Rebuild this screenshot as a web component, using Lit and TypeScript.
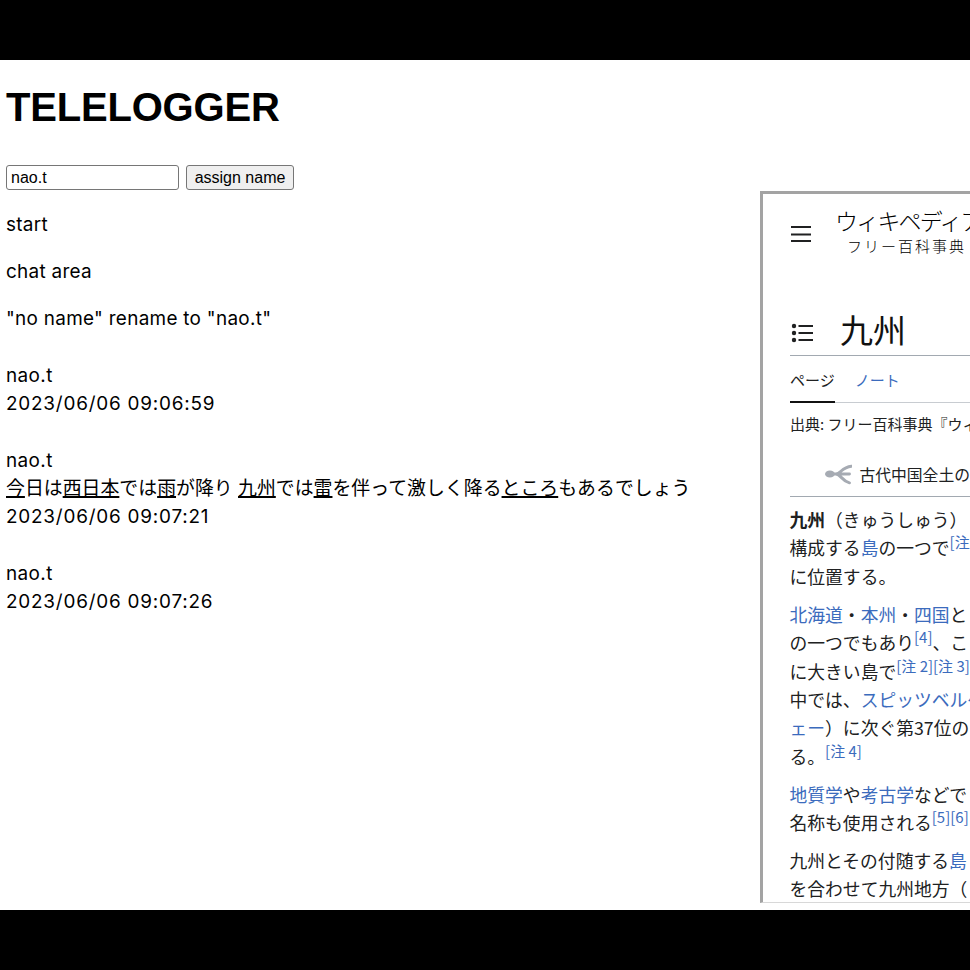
import {LitElement, css, html} from 'lit';
import {customElement} from 'lit/decorators.js';

@customElement('wiki-frame')
export class WikiFrame extends LitElement {
  static styles = css`
    :host {
      display: block;
      box-sizing: border-box;
      width: 210px;
      height: 712px;
      overflow: hidden;
      background: #fff;
      border: 3px solid #a3a3a3;
      border-right: none;
      border-bottom: 1px solid #d8d8d8;
      font-family: "Noto Sans CJK JP", "Liberation Sans", sans-serif;
      color: #202122;
    }

    .inner {
      width: 180px;
      padding-left: 27px;
      white-space: nowrap;
    }

    .head {
      display: flex;
      gap: 23px;
      height: 74px;
      padding-top: 13px;
      box-sizing: border-box;
    }

    .burger {
      display: block;
      margin-top: 18px;
      flex: none;
    }

    .brand {
      color: #000;
    }

    .brand-name {
      font-size: 23px;
      line-height: 26px;
      letter-spacing: -1.8px;
      font-weight: 300;
    }

    .brand-sub {
      font-size: 15px;
      line-height: 20px;
      letter-spacing: 2px;
      font-weight: 300;
      margin-top: 3px;
      margin-left: 12px;
    }

    .title-row {
      display: flex;
      align-items: flex-end;
      gap: 26px;
      height: 88px;
      box-sizing: border-box;
      border-bottom: 1px solid #a2a9b1;
    }

    .title-row svg {
      margin-bottom: 12px;
      margin-left: 1px;
      margin-right: -1px;
    }

    .title-row h1 {
      margin: 0 0 4px;
      font-size: 33px;
      line-height: 44px;
      font-weight: 400;
      color: #111;
    }

    .tabs {
      display: flex;
      gap: 20px;
      height: 47px;
      box-sizing: border-box;
      border-bottom: 1px solid #c8ccd1;
      font-size: 15px;
    }

    .tab {
      line-height: 48px;
      height: 47px;
      box-sizing: border-box;
    }

    .tab.active {
      color: #202122;
      border-bottom: 2px solid #111;
    }

    .tab.link {
      color: #3b6bbd;
    }

    .source {
      font-size: 15px;
      line-height: 20px;
      margin-top: 11px;
    }

    .hatnote {
      display: flex;
      align-items: center;
      gap: 7px;
      height: 63px;
      padding-left: 35px;
      padding-top: 18px;
      box-sizing: border-box;
      border-bottom: 1px solid #a2a9b1;
      font-size: 15.800px;
    }

    .body {
      padding-top: 8px;
      margin-left: -0.500px;
    }

    .body p {
      margin: 0 0 9.500px;
      font-size: 17.800px;
      line-height: 28.400px;
    }

    a {
      color: #3b6bbd;
      text-decoration: none;
    }

    sup {
      font-size: 15px;
      line-height: 0;
      color: #3b6bbd;
      vertical-align: 7px;
    }
  `;

  render() {
    return html`
      <div class="inner">
        <div class="head">
          <svg class="burger" width="22" height="18" viewBox="0 0 22 18">
            <path d="M1 2h20M1 9.500h20M1 16h20" stroke="#202122" stroke-width="2" fill="none"/>
          </svg>
          <div class="brand">
            <div class="brand-name">ウィキペディア</div>
            <div class="brand-sub">フリー百科事典</div>
          </div>
        </div>
        <div class="title-row">
          <svg width="24" height="20" viewBox="0 0 24 20">
            <circle cx="3" cy="3" r="2.200" fill="#202122"/>
            <circle cx="3" cy="10" r="2.200" fill="#202122"/>
            <circle cx="3" cy="17" r="2.200" fill="#202122"/>
            <path d="M7.500 3h14.500M7.500 10h14.500M7.500 17h14.500" stroke="#202122" stroke-width="2" fill="none"/>
          </svg>
          <h1>九州</h1>
        </div>
        <div class="tabs">
          <span class="tab active">ページ</span>
          <span class="tab link">ノート</span>
        </div>
        <div class="source">出典: フリー百科事典『ウィキペディア』</div>
        <div class="hatnote">
          <svg width="28" height="22" viewBox="0 0 28 22">
            <path d="M4 11h7C16 11 17 4 27 3M11 11h14M11 11c5 0 6 7 14 9" stroke="#a6abb3" stroke-width="3" fill="none" stroke-linecap="round"/>
            <ellipse cx="5" cy="11" rx="5" ry="3.600" fill="#a6abb3"/>
          </svg>
          <span>古代中国全土の</span>
        </div>
        <div class="body">
          <p>
            <b>九州</b>（きゅうしゅう）<br>
            構成する<a>島</a>の一つで<sup>[注 1]</sup><br>
            に位置する。
          </p>
          <p>
            <a>北海道</a>・<a>本州</a>・<a>四国</a>と<br>
            の一つでもあり<sup>[4]</sup>、こ<br>
            に大きい島で<sup>[注 2][注 3]</sup><br>
            中では、<a>スピッツベルゲン</a><br>
            <a>ェー</a>）に次ぐ第37位の<br>
            る。<sup>[注 4]</sup>
          </p>
          <p>
            <a>地質学</a>や<a>考古学</a>などで<br>
            名称も使用される<sup>[5][6]</sup>
          </p>
          <p>
            九州とその付随する<a>島</a><br>
            を合わせて九州地方（
          </p>
        </div>
      </div>
    `;
  }
}

@customElement('app-root')
export class AppRoot extends LitElement {
  static styles = css`
    :host {
      display: block;
      width: 970px;
      height: 970px;
      overflow: hidden;
      background: #000;
      font-family: Inter, "Noto Sans CJK JP", sans-serif;
      color: #000;
    }

    .page {
      display: flex;
      justify-content: space-between;
      height: 850px;
      background: #fff;
    }

    .spacer {
      height: 60px;
    }

    .chat {
      padding-left: 6px;
      font-size: 18.900px;
      line-height: 28px;
    }

    h1 {
      margin: 0;
      padding-top: 21px;
      font-family: "Liberation Sans", sans-serif;
      font-size: 40px;
      line-height: 52px;
      letter-spacing: -0.2px;
      font-weight: 700;
    }

    .name-form {
      display: flex;
      gap: 7px;
      margin-top: 32px;
      height: 25px;
    }

    .name-form input {
      box-sizing: border-box;
      width: 173px;
      height: 25px;
      margin: 0;
      padding: 0 4px;
      border: 1px solid #767676;
      border-radius: 3px;
      background: #fff;
      font: 16px "Liberation Sans", sans-serif;
      color: #000;
    }

    .name-form button {
      box-sizing: border-box;
      width: 108px;
      height: 25px;
      margin: 0;
      padding: 0;
      border: 1px solid #767676;
      border-radius: 3px;
      background: #efefef;
      font: 16px "Liberation Sans", sans-serif;
      color: #000;
    }

    .notes {
      padding-top: 2px;
      letter-spacing: 0.300px;
    }

    .notes p {
      margin: 19px 0 0;
    }

    .messages {
      margin-top: 29px;
      white-space: nowrap;
    }

    .message + .message {
      margin-top: 29px;
    }

    .who {
      letter-spacing: 0.400px;
    }

    .stamp {
      letter-spacing: 0.800px;
    }

    u {
      text-decoration-thickness: 1.500px;
    }

    .wiki {
      margin-top: 131px;
      flex: none;
    }
  `;

  render() {
    return html`
      <div class="spacer"></div>
      <div class="page">
        <div class="chat">
          <h1>TELELOGGER</h1>
          <div class="name-form">
            <input type="text" .value=${'nao.t'} />
            <button>assign name</button>
          </div>
          <div class="notes">
            <p>start</p>
            <p>chat area</p>
            <p>"no name" rename to "nao.t"</p>
          </div>
          <div class="messages">
            <div class="message">
              <div class="who">nao.t</div>
              <div class="stamp">2023/06/06 09:06:59</div>
            </div>
            <div class="message">
              <div class="who">nao.t</div>
              <div><u>今</u>日は<u>西日本</u>では<u>雨</u>が降り <u>九州</u>では<u>雷</u>を伴って激しく降る<u>ところ</u>もあるでしょう</div>
              <div class="stamp">2023/06/06 09:07:21</div>
            </div>
            <div class="message">
              <div class="who">nao.t</div>
              <div class="stamp">2023/06/06 09:07:26</div>
            </div>
          </div>
        </div>
        <wiki-frame class="wiki"></wiki-frame>
      </div>
    `;
  }
}
